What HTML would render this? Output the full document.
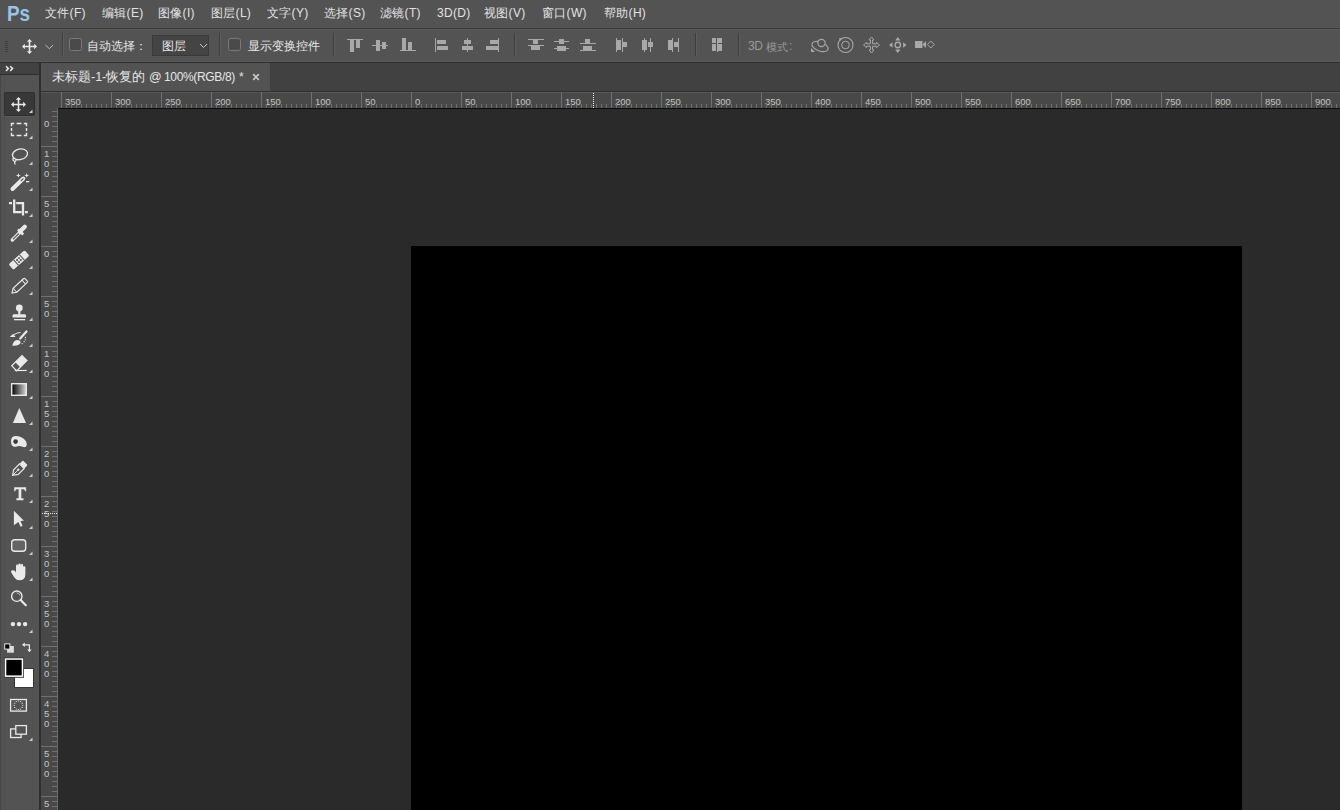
<!DOCTYPE html><html><head><meta charset="utf-8"><style>
*{margin:0;padding:0;box-sizing:border-box}
html,body{width:1340px;height:810px;overflow:hidden;background:#2a2a2a;font-family:"Liberation Sans",sans-serif;font-size:12px;color:#e6e6e6}
.a{position:absolute}
.menu{top:5px;line-height:16px;letter-spacing:0.3px;font-size:12px;color:#e2e2e2;white-space:nowrap}
.ot{line-height:16px;font-size:12px;color:#e6e6e6;white-space:nowrap}
svg{position:absolute;overflow:visible}
</style></head><body>
<div class="a" style="left:0px;top:0px;width:1340px;height:28px;background:#535353;"></div>
<div class="a" style="left:0px;top:28px;width:1340px;height:1px;background:#383838;"></div>
<div class="a" style="left:0px;top:29px;width:1340px;height:33px;background:#535353;"></div>
<div class="a" style="left:0px;top:29px;width:1340px;height:1px;background:#5a5a5a;"></div>
<div class="a" style="left:0px;top:61px;width:1340px;height:1px;background:#5a5a5a;"></div>
<div class="a" style="left:0px;top:62px;width:1340px;height:1px;background:#2e2e2e;"></div>
<div class="a" style="left:41px;top:63px;width:1299px;height:28px;background:#414141;"></div>
<div class="a" style="left:41px;top:63px;width:229px;height:28px;background:#535353;"></div>
<div class="a" style="left:41px;top:91px;width:1299px;height:1px;background:#303030;"></div>
<div class="a" style="left:0px;top:63px;width:39px;height:11px;background:#424242;"></div>
<div class="a" style="left:0px;top:74px;width:39px;height:1px;background:#2e2e2e;"></div>
<div class="a" style="left:0px;top:75px;width:39px;height:735px;background:#535353;"></div>
<div class="a" style="left:0px;top:75px;width:1px;height:735px;background:#454545;"></div>
<div class="a" style="left:4px;top:75px;width:1px;height:735px;background:#4d4d4d;"></div>
<div class="a" style="left:39px;top:63px;width:2px;height:747px;background:#2f2f2f;"></div>
<div class="a" style="left:41px;top:92px;width:1299px;height:16px;background:#484848;"></div>
<div class="a" style="left:41px;top:92px;width:16px;height:718px;background:#484848;"></div>
<div class="a" style="left:41px;top:92px;width:1299px;height:1px;background:#585858;"></div>
<div class="a" style="left:58px;top:108px;width:1282px;height:1px;background:#0c0c0c;"></div>
<div class="a" style="left:57px;top:108px;width:1px;height:702px;background:#6a6a6a;"></div>
<div class="a" style="left:411px;top:246px;width:831px;height:564px;background:#000000;"></div>
<svg class="a" style="left:0;top:0" width="1340" height="810"><rect x="61" y="92" width="1" height="16" fill="#707070"/><text x="65" y="105" font-size="9.5" fill="#c4c4c4" font-family="Liberation Sans">350</text><rect x="66" y="104" width="1" height="4" fill="#707070"/><rect x="71" y="104" width="1" height="4" fill="#707070"/><rect x="76" y="104" width="1" height="4" fill="#707070"/><rect x="81" y="104" width="1" height="4" fill="#707070"/><rect x="86" y="104" width="1" height="4" fill="#707070"/><rect x="91" y="104" width="1" height="4" fill="#707070"/><rect x="96" y="104" width="1" height="4" fill="#707070"/><rect x="101" y="104" width="1" height="4" fill="#707070"/><rect x="106" y="104" width="1" height="4" fill="#707070"/><rect x="111" y="92" width="1" height="16" fill="#707070"/><text x="115" y="105" font-size="9.5" fill="#c4c4c4" font-family="Liberation Sans">300</text><rect x="116" y="104" width="1" height="4" fill="#707070"/><rect x="121" y="104" width="1" height="4" fill="#707070"/><rect x="126" y="104" width="1" height="4" fill="#707070"/><rect x="131" y="104" width="1" height="4" fill="#707070"/><rect x="136" y="104" width="1" height="4" fill="#707070"/><rect x="141" y="104" width="1" height="4" fill="#707070"/><rect x="146" y="104" width="1" height="4" fill="#707070"/><rect x="151" y="104" width="1" height="4" fill="#707070"/><rect x="156" y="104" width="1" height="4" fill="#707070"/><rect x="161" y="92" width="1" height="16" fill="#707070"/><text x="165" y="105" font-size="9.5" fill="#c4c4c4" font-family="Liberation Sans">250</text><rect x="166" y="104" width="1" height="4" fill="#707070"/><rect x="171" y="104" width="1" height="4" fill="#707070"/><rect x="176" y="104" width="1" height="4" fill="#707070"/><rect x="181" y="104" width="1" height="4" fill="#707070"/><rect x="186" y="104" width="1" height="4" fill="#707070"/><rect x="191" y="104" width="1" height="4" fill="#707070"/><rect x="196" y="104" width="1" height="4" fill="#707070"/><rect x="201" y="104" width="1" height="4" fill="#707070"/><rect x="206" y="104" width="1" height="4" fill="#707070"/><rect x="211" y="92" width="1" height="16" fill="#707070"/><text x="215" y="105" font-size="9.5" fill="#c4c4c4" font-family="Liberation Sans">200</text><rect x="216" y="104" width="1" height="4" fill="#707070"/><rect x="221" y="104" width="1" height="4" fill="#707070"/><rect x="226" y="104" width="1" height="4" fill="#707070"/><rect x="231" y="104" width="1" height="4" fill="#707070"/><rect x="236" y="104" width="1" height="4" fill="#707070"/><rect x="241" y="104" width="1" height="4" fill="#707070"/><rect x="246" y="104" width="1" height="4" fill="#707070"/><rect x="251" y="104" width="1" height="4" fill="#707070"/><rect x="256" y="104" width="1" height="4" fill="#707070"/><rect x="261" y="92" width="1" height="16" fill="#707070"/><text x="265" y="105" font-size="9.5" fill="#c4c4c4" font-family="Liberation Sans">150</text><rect x="266" y="104" width="1" height="4" fill="#707070"/><rect x="271" y="104" width="1" height="4" fill="#707070"/><rect x="276" y="104" width="1" height="4" fill="#707070"/><rect x="281" y="104" width="1" height="4" fill="#707070"/><rect x="286" y="104" width="1" height="4" fill="#707070"/><rect x="291" y="104" width="1" height="4" fill="#707070"/><rect x="296" y="104" width="1" height="4" fill="#707070"/><rect x="301" y="104" width="1" height="4" fill="#707070"/><rect x="306" y="104" width="1" height="4" fill="#707070"/><rect x="311" y="92" width="1" height="16" fill="#707070"/><text x="315" y="105" font-size="9.5" fill="#c4c4c4" font-family="Liberation Sans">100</text><rect x="316" y="104" width="1" height="4" fill="#707070"/><rect x="321" y="104" width="1" height="4" fill="#707070"/><rect x="326" y="104" width="1" height="4" fill="#707070"/><rect x="331" y="104" width="1" height="4" fill="#707070"/><rect x="336" y="104" width="1" height="4" fill="#707070"/><rect x="341" y="104" width="1" height="4" fill="#707070"/><rect x="346" y="104" width="1" height="4" fill="#707070"/><rect x="351" y="104" width="1" height="4" fill="#707070"/><rect x="356" y="104" width="1" height="4" fill="#707070"/><rect x="361" y="92" width="1" height="16" fill="#707070"/><text x="365" y="105" font-size="9.5" fill="#c4c4c4" font-family="Liberation Sans">50</text><rect x="366" y="104" width="1" height="4" fill="#707070"/><rect x="371" y="104" width="1" height="4" fill="#707070"/><rect x="376" y="104" width="1" height="4" fill="#707070"/><rect x="381" y="104" width="1" height="4" fill="#707070"/><rect x="386" y="104" width="1" height="4" fill="#707070"/><rect x="391" y="104" width="1" height="4" fill="#707070"/><rect x="396" y="104" width="1" height="4" fill="#707070"/><rect x="401" y="104" width="1" height="4" fill="#707070"/><rect x="406" y="104" width="1" height="4" fill="#707070"/><rect x="411" y="92" width="1" height="16" fill="#707070"/><text x="415" y="105" font-size="9.5" fill="#c4c4c4" font-family="Liberation Sans">0</text><rect x="416" y="104" width="1" height="4" fill="#707070"/><rect x="421" y="104" width="1" height="4" fill="#707070"/><rect x="426" y="104" width="1" height="4" fill="#707070"/><rect x="431" y="104" width="1" height="4" fill="#707070"/><rect x="436" y="104" width="1" height="4" fill="#707070"/><rect x="441" y="104" width="1" height="4" fill="#707070"/><rect x="446" y="104" width="1" height="4" fill="#707070"/><rect x="451" y="104" width="1" height="4" fill="#707070"/><rect x="456" y="104" width="1" height="4" fill="#707070"/><rect x="461" y="92" width="1" height="16" fill="#707070"/><text x="465" y="105" font-size="9.5" fill="#c4c4c4" font-family="Liberation Sans">50</text><rect x="466" y="104" width="1" height="4" fill="#707070"/><rect x="471" y="104" width="1" height="4" fill="#707070"/><rect x="476" y="104" width="1" height="4" fill="#707070"/><rect x="481" y="104" width="1" height="4" fill="#707070"/><rect x="486" y="104" width="1" height="4" fill="#707070"/><rect x="491" y="104" width="1" height="4" fill="#707070"/><rect x="496" y="104" width="1" height="4" fill="#707070"/><rect x="501" y="104" width="1" height="4" fill="#707070"/><rect x="506" y="104" width="1" height="4" fill="#707070"/><rect x="511" y="92" width="1" height="16" fill="#707070"/><text x="515" y="105" font-size="9.5" fill="#c4c4c4" font-family="Liberation Sans">100</text><rect x="516" y="104" width="1" height="4" fill="#707070"/><rect x="521" y="104" width="1" height="4" fill="#707070"/><rect x="526" y="104" width="1" height="4" fill="#707070"/><rect x="531" y="104" width="1" height="4" fill="#707070"/><rect x="536" y="104" width="1" height="4" fill="#707070"/><rect x="541" y="104" width="1" height="4" fill="#707070"/><rect x="546" y="104" width="1" height="4" fill="#707070"/><rect x="551" y="104" width="1" height="4" fill="#707070"/><rect x="556" y="104" width="1" height="4" fill="#707070"/><rect x="561" y="92" width="1" height="16" fill="#707070"/><text x="565" y="105" font-size="9.5" fill="#c4c4c4" font-family="Liberation Sans">150</text><rect x="566" y="104" width="1" height="4" fill="#707070"/><rect x="571" y="104" width="1" height="4" fill="#707070"/><rect x="576" y="104" width="1" height="4" fill="#707070"/><rect x="581" y="104" width="1" height="4" fill="#707070"/><rect x="586" y="104" width="1" height="4" fill="#707070"/><rect x="591" y="104" width="1" height="4" fill="#707070"/><rect x="596" y="104" width="1" height="4" fill="#707070"/><rect x="601" y="104" width="1" height="4" fill="#707070"/><rect x="606" y="104" width="1" height="4" fill="#707070"/><rect x="611" y="92" width="1" height="16" fill="#707070"/><text x="615" y="105" font-size="9.5" fill="#c4c4c4" font-family="Liberation Sans">200</text><rect x="616" y="104" width="1" height="4" fill="#707070"/><rect x="621" y="104" width="1" height="4" fill="#707070"/><rect x="626" y="104" width="1" height="4" fill="#707070"/><rect x="631" y="104" width="1" height="4" fill="#707070"/><rect x="636" y="104" width="1" height="4" fill="#707070"/><rect x="641" y="104" width="1" height="4" fill="#707070"/><rect x="646" y="104" width="1" height="4" fill="#707070"/><rect x="651" y="104" width="1" height="4" fill="#707070"/><rect x="656" y="104" width="1" height="4" fill="#707070"/><rect x="661" y="92" width="1" height="16" fill="#707070"/><text x="665" y="105" font-size="9.5" fill="#c4c4c4" font-family="Liberation Sans">250</text><rect x="666" y="104" width="1" height="4" fill="#707070"/><rect x="671" y="104" width="1" height="4" fill="#707070"/><rect x="676" y="104" width="1" height="4" fill="#707070"/><rect x="681" y="104" width="1" height="4" fill="#707070"/><rect x="686" y="104" width="1" height="4" fill="#707070"/><rect x="691" y="104" width="1" height="4" fill="#707070"/><rect x="696" y="104" width="1" height="4" fill="#707070"/><rect x="701" y="104" width="1" height="4" fill="#707070"/><rect x="706" y="104" width="1" height="4" fill="#707070"/><rect x="711" y="92" width="1" height="16" fill="#707070"/><text x="715" y="105" font-size="9.5" fill="#c4c4c4" font-family="Liberation Sans">300</text><rect x="716" y="104" width="1" height="4" fill="#707070"/><rect x="721" y="104" width="1" height="4" fill="#707070"/><rect x="726" y="104" width="1" height="4" fill="#707070"/><rect x="731" y="104" width="1" height="4" fill="#707070"/><rect x="736" y="104" width="1" height="4" fill="#707070"/><rect x="741" y="104" width="1" height="4" fill="#707070"/><rect x="746" y="104" width="1" height="4" fill="#707070"/><rect x="751" y="104" width="1" height="4" fill="#707070"/><rect x="756" y="104" width="1" height="4" fill="#707070"/><rect x="761" y="92" width="1" height="16" fill="#707070"/><text x="765" y="105" font-size="9.5" fill="#c4c4c4" font-family="Liberation Sans">350</text><rect x="766" y="104" width="1" height="4" fill="#707070"/><rect x="771" y="104" width="1" height="4" fill="#707070"/><rect x="776" y="104" width="1" height="4" fill="#707070"/><rect x="781" y="104" width="1" height="4" fill="#707070"/><rect x="786" y="104" width="1" height="4" fill="#707070"/><rect x="791" y="104" width="1" height="4" fill="#707070"/><rect x="796" y="104" width="1" height="4" fill="#707070"/><rect x="801" y="104" width="1" height="4" fill="#707070"/><rect x="806" y="104" width="1" height="4" fill="#707070"/><rect x="811" y="92" width="1" height="16" fill="#707070"/><text x="815" y="105" font-size="9.5" fill="#c4c4c4" font-family="Liberation Sans">400</text><rect x="816" y="104" width="1" height="4" fill="#707070"/><rect x="821" y="104" width="1" height="4" fill="#707070"/><rect x="826" y="104" width="1" height="4" fill="#707070"/><rect x="831" y="104" width="1" height="4" fill="#707070"/><rect x="836" y="104" width="1" height="4" fill="#707070"/><rect x="841" y="104" width="1" height="4" fill="#707070"/><rect x="846" y="104" width="1" height="4" fill="#707070"/><rect x="851" y="104" width="1" height="4" fill="#707070"/><rect x="856" y="104" width="1" height="4" fill="#707070"/><rect x="861" y="92" width="1" height="16" fill="#707070"/><text x="865" y="105" font-size="9.5" fill="#c4c4c4" font-family="Liberation Sans">450</text><rect x="866" y="104" width="1" height="4" fill="#707070"/><rect x="871" y="104" width="1" height="4" fill="#707070"/><rect x="876" y="104" width="1" height="4" fill="#707070"/><rect x="881" y="104" width="1" height="4" fill="#707070"/><rect x="886" y="104" width="1" height="4" fill="#707070"/><rect x="891" y="104" width="1" height="4" fill="#707070"/><rect x="896" y="104" width="1" height="4" fill="#707070"/><rect x="901" y="104" width="1" height="4" fill="#707070"/><rect x="906" y="104" width="1" height="4" fill="#707070"/><rect x="911" y="92" width="1" height="16" fill="#707070"/><text x="915" y="105" font-size="9.5" fill="#c4c4c4" font-family="Liberation Sans">500</text><rect x="916" y="104" width="1" height="4" fill="#707070"/><rect x="921" y="104" width="1" height="4" fill="#707070"/><rect x="926" y="104" width="1" height="4" fill="#707070"/><rect x="931" y="104" width="1" height="4" fill="#707070"/><rect x="936" y="104" width="1" height="4" fill="#707070"/><rect x="941" y="104" width="1" height="4" fill="#707070"/><rect x="946" y="104" width="1" height="4" fill="#707070"/><rect x="951" y="104" width="1" height="4" fill="#707070"/><rect x="956" y="104" width="1" height="4" fill="#707070"/><rect x="961" y="92" width="1" height="16" fill="#707070"/><text x="965" y="105" font-size="9.5" fill="#c4c4c4" font-family="Liberation Sans">550</text><rect x="966" y="104" width="1" height="4" fill="#707070"/><rect x="971" y="104" width="1" height="4" fill="#707070"/><rect x="976" y="104" width="1" height="4" fill="#707070"/><rect x="981" y="104" width="1" height="4" fill="#707070"/><rect x="986" y="104" width="1" height="4" fill="#707070"/><rect x="991" y="104" width="1" height="4" fill="#707070"/><rect x="996" y="104" width="1" height="4" fill="#707070"/><rect x="1001" y="104" width="1" height="4" fill="#707070"/><rect x="1006" y="104" width="1" height="4" fill="#707070"/><rect x="1011" y="92" width="1" height="16" fill="#707070"/><text x="1015" y="105" font-size="9.5" fill="#c4c4c4" font-family="Liberation Sans">600</text><rect x="1016" y="104" width="1" height="4" fill="#707070"/><rect x="1021" y="104" width="1" height="4" fill="#707070"/><rect x="1026" y="104" width="1" height="4" fill="#707070"/><rect x="1031" y="104" width="1" height="4" fill="#707070"/><rect x="1036" y="104" width="1" height="4" fill="#707070"/><rect x="1041" y="104" width="1" height="4" fill="#707070"/><rect x="1046" y="104" width="1" height="4" fill="#707070"/><rect x="1051" y="104" width="1" height="4" fill="#707070"/><rect x="1056" y="104" width="1" height="4" fill="#707070"/><rect x="1061" y="92" width="1" height="16" fill="#707070"/><text x="1065" y="105" font-size="9.5" fill="#c4c4c4" font-family="Liberation Sans">650</text><rect x="1066" y="104" width="1" height="4" fill="#707070"/><rect x="1071" y="104" width="1" height="4" fill="#707070"/><rect x="1076" y="104" width="1" height="4" fill="#707070"/><rect x="1081" y="104" width="1" height="4" fill="#707070"/><rect x="1086" y="104" width="1" height="4" fill="#707070"/><rect x="1091" y="104" width="1" height="4" fill="#707070"/><rect x="1096" y="104" width="1" height="4" fill="#707070"/><rect x="1101" y="104" width="1" height="4" fill="#707070"/><rect x="1106" y="104" width="1" height="4" fill="#707070"/><rect x="1111" y="92" width="1" height="16" fill="#707070"/><text x="1115" y="105" font-size="9.5" fill="#c4c4c4" font-family="Liberation Sans">700</text><rect x="1116" y="104" width="1" height="4" fill="#707070"/><rect x="1121" y="104" width="1" height="4" fill="#707070"/><rect x="1126" y="104" width="1" height="4" fill="#707070"/><rect x="1131" y="104" width="1" height="4" fill="#707070"/><rect x="1136" y="104" width="1" height="4" fill="#707070"/><rect x="1141" y="104" width="1" height="4" fill="#707070"/><rect x="1146" y="104" width="1" height="4" fill="#707070"/><rect x="1151" y="104" width="1" height="4" fill="#707070"/><rect x="1156" y="104" width="1" height="4" fill="#707070"/><rect x="1161" y="92" width="1" height="16" fill="#707070"/><text x="1165" y="105" font-size="9.5" fill="#c4c4c4" font-family="Liberation Sans">750</text><rect x="1166" y="104" width="1" height="4" fill="#707070"/><rect x="1171" y="104" width="1" height="4" fill="#707070"/><rect x="1176" y="104" width="1" height="4" fill="#707070"/><rect x="1181" y="104" width="1" height="4" fill="#707070"/><rect x="1186" y="104" width="1" height="4" fill="#707070"/><rect x="1191" y="104" width="1" height="4" fill="#707070"/><rect x="1196" y="104" width="1" height="4" fill="#707070"/><rect x="1201" y="104" width="1" height="4" fill="#707070"/><rect x="1206" y="104" width="1" height="4" fill="#707070"/><rect x="1211" y="92" width="1" height="16" fill="#707070"/><text x="1215" y="105" font-size="9.5" fill="#c4c4c4" font-family="Liberation Sans">800</text><rect x="1216" y="104" width="1" height="4" fill="#707070"/><rect x="1221" y="104" width="1" height="4" fill="#707070"/><rect x="1226" y="104" width="1" height="4" fill="#707070"/><rect x="1231" y="104" width="1" height="4" fill="#707070"/><rect x="1236" y="104" width="1" height="4" fill="#707070"/><rect x="1241" y="104" width="1" height="4" fill="#707070"/><rect x="1246" y="104" width="1" height="4" fill="#707070"/><rect x="1251" y="104" width="1" height="4" fill="#707070"/><rect x="1256" y="104" width="1" height="4" fill="#707070"/><rect x="1261" y="92" width="1" height="16" fill="#707070"/><text x="1265" y="105" font-size="9.5" fill="#c4c4c4" font-family="Liberation Sans">850</text><rect x="1266" y="104" width="1" height="4" fill="#707070"/><rect x="1271" y="104" width="1" height="4" fill="#707070"/><rect x="1276" y="104" width="1" height="4" fill="#707070"/><rect x="1281" y="104" width="1" height="4" fill="#707070"/><rect x="1286" y="104" width="1" height="4" fill="#707070"/><rect x="1291" y="104" width="1" height="4" fill="#707070"/><rect x="1296" y="104" width="1" height="4" fill="#707070"/><rect x="1301" y="104" width="1" height="4" fill="#707070"/><rect x="1306" y="104" width="1" height="4" fill="#707070"/><rect x="1311" y="92" width="1" height="16" fill="#707070"/><text x="1315" y="105" font-size="9.5" fill="#c4c4c4" font-family="Liberation Sans">900</text><rect x="1316" y="104" width="1" height="4" fill="#707070"/><rect x="1321" y="104" width="1" height="4" fill="#707070"/><rect x="1326" y="104" width="1" height="4" fill="#707070"/><rect x="1331" y="104" width="1" height="4" fill="#707070"/><rect x="1336" y="104" width="1" height="4" fill="#707070"/><rect x="52" y="111" width="5" height="1" fill="#707070"/><rect x="52" y="116" width="5" height="1" fill="#707070"/><rect x="52" y="121" width="5" height="1" fill="#707070"/><rect x="52" y="126" width="5" height="1" fill="#707070"/><rect x="52" y="131" width="5" height="1" fill="#707070"/><rect x="52" y="136" width="5" height="1" fill="#707070"/><rect x="52" y="141" width="5" height="1" fill="#707070"/><rect x="41" y="146" width="16" height="1" fill="#707070"/><text x="44" y="156.8" font-size="9.5" fill="#c4c4c4" font-family="Liberation Sans">1</text><text x="44" y="166.8" font-size="9.5" fill="#c4c4c4" font-family="Liberation Sans">0</text><text x="44" y="176.8" font-size="9.5" fill="#c4c4c4" font-family="Liberation Sans">0</text><rect x="52" y="151" width="5" height="1" fill="#707070"/><rect x="52" y="156" width="5" height="1" fill="#707070"/><rect x="52" y="161" width="5" height="1" fill="#707070"/><rect x="52" y="166" width="5" height="1" fill="#707070"/><rect x="52" y="171" width="5" height="1" fill="#707070"/><rect x="52" y="176" width="5" height="1" fill="#707070"/><rect x="52" y="181" width="5" height="1" fill="#707070"/><rect x="52" y="186" width="5" height="1" fill="#707070"/><rect x="52" y="191" width="5" height="1" fill="#707070"/><rect x="41" y="196" width="16" height="1" fill="#707070"/><text x="44" y="206.8" font-size="9.5" fill="#c4c4c4" font-family="Liberation Sans">5</text><text x="44" y="216.8" font-size="9.5" fill="#c4c4c4" font-family="Liberation Sans">0</text><rect x="52" y="201" width="5" height="1" fill="#707070"/><rect x="52" y="206" width="5" height="1" fill="#707070"/><rect x="52" y="211" width="5" height="1" fill="#707070"/><rect x="52" y="216" width="5" height="1" fill="#707070"/><rect x="52" y="221" width="5" height="1" fill="#707070"/><rect x="52" y="226" width="5" height="1" fill="#707070"/><rect x="52" y="231" width="5" height="1" fill="#707070"/><rect x="52" y="236" width="5" height="1" fill="#707070"/><rect x="52" y="241" width="5" height="1" fill="#707070"/><rect x="41" y="246" width="16" height="1" fill="#707070"/><text x="44" y="256.8" font-size="9.5" fill="#c4c4c4" font-family="Liberation Sans">0</text><rect x="52" y="251" width="5" height="1" fill="#707070"/><rect x="52" y="256" width="5" height="1" fill="#707070"/><rect x="52" y="261" width="5" height="1" fill="#707070"/><rect x="52" y="266" width="5" height="1" fill="#707070"/><rect x="52" y="271" width="5" height="1" fill="#707070"/><rect x="52" y="276" width="5" height="1" fill="#707070"/><rect x="52" y="281" width="5" height="1" fill="#707070"/><rect x="52" y="286" width="5" height="1" fill="#707070"/><rect x="52" y="291" width="5" height="1" fill="#707070"/><rect x="41" y="296" width="16" height="1" fill="#707070"/><text x="44" y="306.8" font-size="9.5" fill="#c4c4c4" font-family="Liberation Sans">5</text><text x="44" y="316.8" font-size="9.5" fill="#c4c4c4" font-family="Liberation Sans">0</text><rect x="52" y="301" width="5" height="1" fill="#707070"/><rect x="52" y="306" width="5" height="1" fill="#707070"/><rect x="52" y="311" width="5" height="1" fill="#707070"/><rect x="52" y="316" width="5" height="1" fill="#707070"/><rect x="52" y="321" width="5" height="1" fill="#707070"/><rect x="52" y="326" width="5" height="1" fill="#707070"/><rect x="52" y="331" width="5" height="1" fill="#707070"/><rect x="52" y="336" width="5" height="1" fill="#707070"/><rect x="52" y="341" width="5" height="1" fill="#707070"/><rect x="41" y="346" width="16" height="1" fill="#707070"/><text x="44" y="356.8" font-size="9.5" fill="#c4c4c4" font-family="Liberation Sans">1</text><text x="44" y="366.8" font-size="9.5" fill="#c4c4c4" font-family="Liberation Sans">0</text><text x="44" y="376.8" font-size="9.5" fill="#c4c4c4" font-family="Liberation Sans">0</text><rect x="52" y="351" width="5" height="1" fill="#707070"/><rect x="52" y="356" width="5" height="1" fill="#707070"/><rect x="52" y="361" width="5" height="1" fill="#707070"/><rect x="52" y="366" width="5" height="1" fill="#707070"/><rect x="52" y="371" width="5" height="1" fill="#707070"/><rect x="52" y="376" width="5" height="1" fill="#707070"/><rect x="52" y="381" width="5" height="1" fill="#707070"/><rect x="52" y="386" width="5" height="1" fill="#707070"/><rect x="52" y="391" width="5" height="1" fill="#707070"/><rect x="41" y="396" width="16" height="1" fill="#707070"/><text x="44" y="406.8" font-size="9.5" fill="#c4c4c4" font-family="Liberation Sans">1</text><text x="44" y="416.8" font-size="9.5" fill="#c4c4c4" font-family="Liberation Sans">5</text><text x="44" y="426.8" font-size="9.5" fill="#c4c4c4" font-family="Liberation Sans">0</text><rect x="52" y="401" width="5" height="1" fill="#707070"/><rect x="52" y="406" width="5" height="1" fill="#707070"/><rect x="52" y="411" width="5" height="1" fill="#707070"/><rect x="52" y="416" width="5" height="1" fill="#707070"/><rect x="52" y="421" width="5" height="1" fill="#707070"/><rect x="52" y="426" width="5" height="1" fill="#707070"/><rect x="52" y="431" width="5" height="1" fill="#707070"/><rect x="52" y="436" width="5" height="1" fill="#707070"/><rect x="52" y="441" width="5" height="1" fill="#707070"/><rect x="41" y="446" width="16" height="1" fill="#707070"/><text x="44" y="456.8" font-size="9.5" fill="#c4c4c4" font-family="Liberation Sans">2</text><text x="44" y="466.8" font-size="9.5" fill="#c4c4c4" font-family="Liberation Sans">0</text><text x="44" y="476.8" font-size="9.5" fill="#c4c4c4" font-family="Liberation Sans">0</text><rect x="52" y="451" width="5" height="1" fill="#707070"/><rect x="52" y="456" width="5" height="1" fill="#707070"/><rect x="52" y="461" width="5" height="1" fill="#707070"/><rect x="52" y="466" width="5" height="1" fill="#707070"/><rect x="52" y="471" width="5" height="1" fill="#707070"/><rect x="52" y="476" width="5" height="1" fill="#707070"/><rect x="52" y="481" width="5" height="1" fill="#707070"/><rect x="52" y="486" width="5" height="1" fill="#707070"/><rect x="52" y="491" width="5" height="1" fill="#707070"/><rect x="41" y="496" width="16" height="1" fill="#707070"/><text x="44" y="506.8" font-size="9.5" fill="#c4c4c4" font-family="Liberation Sans">2</text><text x="44" y="516.8" font-size="9.5" fill="#c4c4c4" font-family="Liberation Sans">5</text><text x="44" y="526.8" font-size="9.5" fill="#c4c4c4" font-family="Liberation Sans">0</text><rect x="52" y="501" width="5" height="1" fill="#707070"/><rect x="52" y="506" width="5" height="1" fill="#707070"/><rect x="52" y="511" width="5" height="1" fill="#707070"/><rect x="52" y="516" width="5" height="1" fill="#707070"/><rect x="52" y="521" width="5" height="1" fill="#707070"/><rect x="52" y="526" width="5" height="1" fill="#707070"/><rect x="52" y="531" width="5" height="1" fill="#707070"/><rect x="52" y="536" width="5" height="1" fill="#707070"/><rect x="52" y="541" width="5" height="1" fill="#707070"/><rect x="41" y="546" width="16" height="1" fill="#707070"/><text x="44" y="556.8" font-size="9.5" fill="#c4c4c4" font-family="Liberation Sans">3</text><text x="44" y="566.8" font-size="9.5" fill="#c4c4c4" font-family="Liberation Sans">0</text><text x="44" y="576.8" font-size="9.5" fill="#c4c4c4" font-family="Liberation Sans">0</text><rect x="52" y="551" width="5" height="1" fill="#707070"/><rect x="52" y="556" width="5" height="1" fill="#707070"/><rect x="52" y="561" width="5" height="1" fill="#707070"/><rect x="52" y="566" width="5" height="1" fill="#707070"/><rect x="52" y="571" width="5" height="1" fill="#707070"/><rect x="52" y="576" width="5" height="1" fill="#707070"/><rect x="52" y="581" width="5" height="1" fill="#707070"/><rect x="52" y="586" width="5" height="1" fill="#707070"/><rect x="52" y="591" width="5" height="1" fill="#707070"/><rect x="41" y="596" width="16" height="1" fill="#707070"/><text x="44" y="606.8" font-size="9.5" fill="#c4c4c4" font-family="Liberation Sans">3</text><text x="44" y="616.8" font-size="9.5" fill="#c4c4c4" font-family="Liberation Sans">5</text><text x="44" y="626.8" font-size="9.5" fill="#c4c4c4" font-family="Liberation Sans">0</text><rect x="52" y="601" width="5" height="1" fill="#707070"/><rect x="52" y="606" width="5" height="1" fill="#707070"/><rect x="52" y="611" width="5" height="1" fill="#707070"/><rect x="52" y="616" width="5" height="1" fill="#707070"/><rect x="52" y="621" width="5" height="1" fill="#707070"/><rect x="52" y="626" width="5" height="1" fill="#707070"/><rect x="52" y="631" width="5" height="1" fill="#707070"/><rect x="52" y="636" width="5" height="1" fill="#707070"/><rect x="52" y="641" width="5" height="1" fill="#707070"/><rect x="41" y="646" width="16" height="1" fill="#707070"/><text x="44" y="656.8" font-size="9.5" fill="#c4c4c4" font-family="Liberation Sans">4</text><text x="44" y="666.8" font-size="9.5" fill="#c4c4c4" font-family="Liberation Sans">0</text><text x="44" y="676.8" font-size="9.5" fill="#c4c4c4" font-family="Liberation Sans">0</text><rect x="52" y="651" width="5" height="1" fill="#707070"/><rect x="52" y="656" width="5" height="1" fill="#707070"/><rect x="52" y="661" width="5" height="1" fill="#707070"/><rect x="52" y="666" width="5" height="1" fill="#707070"/><rect x="52" y="671" width="5" height="1" fill="#707070"/><rect x="52" y="676" width="5" height="1" fill="#707070"/><rect x="52" y="681" width="5" height="1" fill="#707070"/><rect x="52" y="686" width="5" height="1" fill="#707070"/><rect x="52" y="691" width="5" height="1" fill="#707070"/><rect x="41" y="696" width="16" height="1" fill="#707070"/><text x="44" y="706.8" font-size="9.5" fill="#c4c4c4" font-family="Liberation Sans">4</text><text x="44" y="716.8" font-size="9.5" fill="#c4c4c4" font-family="Liberation Sans">5</text><text x="44" y="726.8" font-size="9.5" fill="#c4c4c4" font-family="Liberation Sans">0</text><rect x="52" y="701" width="5" height="1" fill="#707070"/><rect x="52" y="706" width="5" height="1" fill="#707070"/><rect x="52" y="711" width="5" height="1" fill="#707070"/><rect x="52" y="716" width="5" height="1" fill="#707070"/><rect x="52" y="721" width="5" height="1" fill="#707070"/><rect x="52" y="726" width="5" height="1" fill="#707070"/><rect x="52" y="731" width="5" height="1" fill="#707070"/><rect x="52" y="736" width="5" height="1" fill="#707070"/><rect x="52" y="741" width="5" height="1" fill="#707070"/><rect x="41" y="746" width="16" height="1" fill="#707070"/><text x="44" y="756.8" font-size="9.5" fill="#c4c4c4" font-family="Liberation Sans">5</text><text x="44" y="766.8" font-size="9.5" fill="#c4c4c4" font-family="Liberation Sans">0</text><text x="44" y="776.8" font-size="9.5" fill="#c4c4c4" font-family="Liberation Sans">0</text><rect x="52" y="751" width="5" height="1" fill="#707070"/><rect x="52" y="756" width="5" height="1" fill="#707070"/><rect x="52" y="761" width="5" height="1" fill="#707070"/><rect x="52" y="766" width="5" height="1" fill="#707070"/><rect x="52" y="771" width="5" height="1" fill="#707070"/><rect x="52" y="776" width="5" height="1" fill="#707070"/><rect x="52" y="781" width="5" height="1" fill="#707070"/><rect x="52" y="786" width="5" height="1" fill="#707070"/><rect x="52" y="791" width="5" height="1" fill="#707070"/><rect x="41" y="796" width="16" height="1" fill="#707070"/><text x="44" y="806.8" font-size="9.5" fill="#c4c4c4" font-family="Liberation Sans">5</text><text x="44" y="816.8" font-size="9.5" fill="#c4c4c4" font-family="Liberation Sans">5</text><text x="44" y="826.8" font-size="9.5" fill="#c4c4c4" font-family="Liberation Sans">0</text><rect x="52" y="801" width="5" height="1" fill="#707070"/><rect x="52" y="806" width="5" height="1" fill="#707070"/><text x="44" y="126.8" font-size="9.5" fill="#c4c4c4" font-family="Liberation Sans">0</text><rect x="593" y="93" width="1" height="1" fill="#f0f0f0"/><rect x="593" y="95" width="1" height="1" fill="#f0f0f0"/><rect x="593" y="97" width="1" height="1" fill="#f0f0f0"/><rect x="593" y="99" width="1" height="1" fill="#f0f0f0"/><rect x="593" y="101" width="1" height="1" fill="#f0f0f0"/><rect x="593" y="103" width="1" height="1" fill="#f0f0f0"/><rect x="593" y="105" width="1" height="1" fill="#f0f0f0"/><rect x="593" y="107" width="1" height="1" fill="#f0f0f0"/><rect x="42" y="513" width="1" height="1" fill="#f0f0f0"/><rect x="44" y="513" width="1" height="1" fill="#f0f0f0"/><rect x="46" y="513" width="1" height="1" fill="#f0f0f0"/><rect x="48" y="513" width="1" height="1" fill="#f0f0f0"/><rect x="50" y="513" width="1" height="1" fill="#f0f0f0"/><rect x="52" y="513" width="1" height="1" fill="#f0f0f0"/><rect x="54" y="513" width="1" height="1" fill="#f0f0f0"/><rect x="56" y="513" width="1" height="1" fill="#f0f0f0"/></svg>
<div class="a" style="left:41px;top:93px;width:16px;height:15px;background:#484848;"></div>
<div class="a" style="left:7px;top:1.5px;font-size:22px;line-height:24px;font-weight:bold;color:#98c2e6;transform:scaleX(0.86);transform-origin:0 0;letter-spacing:0px">Ps</div>
<div class="a menu" style="left:45px">文件(F)</div>
<div class="a menu" style="left:102px">编辑(E)</div>
<div class="a menu" style="left:158px">图像(I)</div>
<div class="a menu" style="left:211px">图层(L)</div>
<div class="a menu" style="left:267px">文字(Y)</div>
<div class="a menu" style="left:324px">选择(S)</div>
<div class="a menu" style="left:380px">滤镜(T)</div>
<div class="a menu" style="left:437px">3D(D)</div>
<div class="a menu" style="left:484px">视图(V)</div>
<div class="a menu" style="left:542px">窗口(W)</div>
<div class="a menu" style="left:604px">帮助(H)</div>
<div class="a ot" style="left:87px;top:38px">自动选择：</div>
<div class="a" style="left:152px;top:35px;width:57px;height:21px;background:#444444;border:1px solid #3a3a3a"></div>
<div class="a ot" style="left:162px;top:38px">图层</div>
<div class="a ot" style="left:248px;top:38px">显示变换控件</div>
<div class="a ot" style="left:748px;top:38px;color:#9a9a9a;letter-spacing:-0.3px">3D</div>
<div class="a ot" style="left:766px;top:38.5px;color:#9a9a9a;font-size:11px;letter-spacing:-0.3px">模式</div>
<div class="a ot" style="left:789px;top:38px;color:#9a9a9a">:</div>
<div class="a ot" style="left:52px;top:69px;font-size:12.5px">未标题-1-恢复的</div>
<div class="a ot" style="left:149px;top:69px;font-size:12.5px">@</div>
<div class="a ot" style="left:164px;top:69px;font-size:12px;letter-spacing:-0.35px">100%(RGB/8)</div>
<div class="a ot" style="left:239px;top:69px;font-size:12px">*</div>
<svg class="a" style="left:0;top:0" width="300" height="100"><path d="M253.2 74.2 L258.8 79.8 M258.8 74.2 L253.2 79.8" stroke="#c4c4c4" stroke-width="1.8"/></svg>
<svg class="a" style="left:0;top:0" width="40" height="810"><path d="M6 66.3 L8.4 68.6 L6 70.9 M10.2 66.3 L12.6 68.6 L10.2 70.9" fill="none" stroke="#e9e9e9" stroke-width="1.5"/><rect x="4.5" y="92.5" width="30" height="23" rx="1" fill="#383838" stroke="#2e2e2e"/><rect x="5" y="116" width="29" height="1" fill="#5c5c5c"/><path d="M32.5 109.5 L32.5 113 L29 113 Z" fill="#cfcfcf"/><path d="M32.5 135.5 L32.5 139 L29 139 Z" fill="#cfcfcf"/><path d="M32.5 161.5 L32.5 165 L29 165 Z" fill="#cfcfcf"/><path d="M32.5 187.5 L32.5 191 L29 191 Z" fill="#cfcfcf"/><path d="M32.5 213.5 L32.5 217 L29 217 Z" fill="#cfcfcf"/><path d="M32.5 239.5 L32.5 243 L29 243 Z" fill="#cfcfcf"/><path d="M32.5 265.5 L32.5 269 L29 269 Z" fill="#cfcfcf"/><path d="M32.5 291.5 L32.5 295 L29 295 Z" fill="#cfcfcf"/><path d="M32.5 317.5 L32.5 321 L29 321 Z" fill="#cfcfcf"/><path d="M32.5 343.5 L32.5 347 L29 347 Z" fill="#cfcfcf"/><path d="M32.5 369.5 L32.5 373 L29 373 Z" fill="#cfcfcf"/><path d="M32.5 395.5 L32.5 399 L29 399 Z" fill="#cfcfcf"/><path d="M32.5 421.5 L32.5 425 L29 425 Z" fill="#cfcfcf"/><path d="M32.5 447.5 L32.5 451 L29 451 Z" fill="#cfcfcf"/><path d="M32.5 473.5 L32.5 477 L29 477 Z" fill="#cfcfcf"/><path d="M32.5 499.5 L32.5 503 L29 503 Z" fill="#cfcfcf"/><path d="M32.5 525.5 L32.5 529 L29 529 Z" fill="#cfcfcf"/><path d="M32.5 551.5 L32.5 555 L29 555 Z" fill="#cfcfcf"/><path d="M32.5 577.5 L32.5 581 L29 581 Z" fill="#cfcfcf"/><path d="M32.5 629.5 L32.5 633 L29 633 Z" fill="#cfcfcf"/><path d="M32.5 737.5 L32.5 741 L29 741 Z" fill="#cfcfcf"/><path d="M18.5 97 L21.2 99.8 L19.3 99.8 L19.3 103.7 L23.2 103.7 L23.2 101.8 L26 104.5 L23.2 107.2 L23.2 105.3 L19.3 105.3 L19.3 109.2 L21.2 109.2 L18.5 112 L15.8 109.2 L17.7 109.2 L17.7 105.3 L13.8 105.3 L13.8 107.2 L11 104.5 L13.8 101.8 L13.8 103.7 L17.7 103.7 L17.7 99.8 L15.8 99.8 Z" fill="#e9e9e9"/><path d="M11.5 126.2 V123.5 H14.2 M16.6 123.5 H21.4 M23.8 123.5 H26.5 V126.2 M26.5 128 V131 M26.5 132.8 V135.5 H23.8 M21.4 135.5 H16.6 M14.2 135.5 H11.5 V132.8 M11.5 131 V128" fill="none" stroke="#e9e9e9" stroke-width="1.4"/><ellipse cx="20" cy="154.3" rx="7.6" ry="5.3" transform="rotate(-12 20 154.3)" fill="none" stroke="#e9e9e9" stroke-width="1.3"/><path d="M13.8 157.5 Q12 160 14 161 Q16.5 162 15.8 159.5 M14.5 161 L15 164.5" fill="none" stroke="#e9e9e9" stroke-width="1.3"/><path d="M12.5 189 L23.3 178.5" stroke="#e9e9e9" stroke-width="4" stroke-linecap="round"/><path d="M21.2 180.6 L23 178.8" stroke="#535353" stroke-width="1.2" stroke-linecap="round"/><path d="M18.4 173.3 L19.2 175 L21 175.4 L19.2 175.9 L18.4 177.6 L17.6 175.9 L15.8 175.4 L17.6 175 Z" fill="#e9e9e9"/><path d="M26.7 173.3 L27.5 175 L29.3 175.4 L27.5 175.9 L26.7 177.6 L25.9 175.9 L24.1 175.4 L25.9 175 Z" fill="#e9e9e9"/><rect x="26" y="181" width="3.2" height="1.3" fill="#e9e9e9"/><path d="M9 203.2 H12 M14.2 199.5 V212.2 H21.5 M16.2 203.2 H23 V215.5 M25 212.2 H27.8" fill="none" stroke="#e9e9e9" stroke-width="2.3"/><path d="M12.3 240 L19.5 232.8" stroke="#e9e9e9" stroke-width="3.4" stroke-linecap="round"/><path d="M13 239.3 L18.8 233.5" stroke="#535353" stroke-width="1.1"/><path d="M18 229.3 L23.2 234.5" stroke="#e9e9e9" stroke-width="2.6"/><path d="M20 231.5 L24.8 226.7" stroke="#e9e9e9" stroke-width="4.2" stroke-linecap="round"/><g transform="rotate(-42 19 260)"><rect x="8.3" y="256.3" width="21.4" height="7.4" rx="1.6" fill="#e9e9e9"/><rect x="14.6" y="256.3" width="1" height="7.4" fill="#535353"/><rect x="22.4" y="256.3" width="1" height="7.4" fill="#535353"/></g><circle cx="17.1" cy="260" r="0.95" fill="#3a3a3a"/><circle cx="20.9" cy="260" r="0.95" fill="#3a3a3a"/><circle cx="19" cy="258.1" r="0.95" fill="#3a3a3a"/><circle cx="19" cy="261.9" r="0.95" fill="#3a3a3a"/><g transform="rotate(-43 19 286.5)"><path d="M9.5 286.5 L13.5 283.8 H27.5 Q28.8 283.8 28.8 285.1 V287.9 Q28.8 289.2 27.5 289.2 H13.5 Z" fill="none" stroke="#e9e9e9" stroke-width="1.2"/><path d="M13.5 283.8 V289.2 M25.5 283.8 V289.2" stroke="#e9e9e9" stroke-width="1"/></g><circle cx="19.3" cy="308" r="3.4" fill="#e9e9e9"/><rect x="18.2" y="310.5" width="2.2" height="4" fill="#e9e9e9"/><path d="M12.6 317.6 V315.5 Q12.6 314.3 14 314.3 H24.6 Q26 314.3 26 315.5 V317.6 Z" fill="#e9e9e9"/><rect x="13.9" y="319" width="11.2" height="1.3" fill="#e9e9e9"/><path d="M26.5 331.5 L20.2 338.6" stroke="#e9e9e9" stroke-width="2.2" stroke-linecap="round"/><path d="M12.3 345.8 Q13 341.5 16 340.2 Q18.6 339.4 20.3 341.2 Q21.4 343 19.2 344.6 Q16.5 346 12.3 345.8 Z" fill="#e9e9e9"/><path d="M9.8 337 L13.2 333.8 L15.5 337 Z" fill="#e9e9e9"/><path d="M14 334.6 Q17 332.6 20.5 332.5" fill="none" stroke="#e9e9e9" stroke-width="1"/><circle cx="25.4" cy="337.5" r="0.65" fill="#e9e9e9"/><circle cx="25.3" cy="339.8" r="0.65" fill="#e9e9e9"/><circle cx="24.1" cy="341.7" r="0.65" fill="#e9e9e9"/><circle cx="22.2" cy="343.6" r="0.65" fill="#e9e9e9"/><g transform="rotate(-45 19.5 363)"><rect x="12" y="359.5" width="14.5" height="7" fill="none" stroke="#e9e9e9" stroke-width="1.2"/><rect x="17" y="359.5" width="9.5" height="7" fill="#e9e9e9"/></g><rect x="14.8" y="369.9" width="11.9" height="1.2" fill="#e9e9e9"/><defs><linearGradient id="gr" x1="0" x2="1"><stop offset="0" stop-color="#000"/><stop offset="1" stop-color="#d8d8d8"/></linearGradient></defs><rect x="11.7" y="383.7" width="14.6" height="11.6" fill="url(#gr)" stroke="#e9e9e9" stroke-width="1.4"/><path d="M19.3 408 L26.1 423 L12.9 423 Z" fill="#e9e9e9"/><path d="M11 441 Q11 436 16 436 Q21 436 24.5 439.5 Q27.5 442.5 26.5 446 Q25.5 448 22 446.5 Q19 445.5 16 446.8 Q11 447.5 11 441 Z" fill="#e9e9e9"/><circle cx="15.6" cy="441.6" r="2.3" fill="#3a3a3a"/><g transform="rotate(-45 19.5 468.5)"><path d="M9.8 468.5 L14.5 465.2 H22.8 V471.8 H14.5 Z" fill="none" stroke="#e9e9e9" stroke-width="1.2"/><rect x="22.8" y="465.2" width="4.8" height="6.6" rx="0.8" fill="#e9e9e9"/><path d="M10 468.5 H17.5" stroke="#e9e9e9" stroke-width="0.9"/><circle cx="17.8" cy="468.5" r="1.2" fill="#e9e9e9"/></g><path d="M14.2 487.3 H26.1 V491.3 H25.1 Q24.9 489.3 23.4 489.3 H21.3 V498.3 H23.5 V500.3 H16.4 V498.3 H18.6 V489.3 H16.9 Q15.4 489.3 15.2 491.3 H14.2 Z" fill="#e9e9e9"/><path d="M13.9 510.8 L23.9 520.8 L20.4 520.9 L22.6 525.8 L20.6 526.8 L18.4 521.9 L13.9 525.3 Z" fill="#e9e9e9"/><rect x="11.7" y="539.7" width="14" height="11.6" rx="3" fill="#646464" stroke="#e9e9e9" stroke-width="1.4"/><path d="M14.5 570.5 L16 572.5 V566 Q16 564.6 17.2 564.6 Q18.3 564.6 18.3 566 V570 V564.8 Q18.3 563.5 19.6 563.5 Q20.8 563.5 20.8 564.8 V570 V565.4 Q20.8 564.1 22 564.1 Q23.2 564.1 23.2 565.4 V571 V567.3 Q23.2 566.2 24.3 566.2 Q25.4 566.2 25.4 567.5 V574 Q25.4 580.3 19.4 580.3 Q16.4 580.3 14.6 577.8 L11.2 572.5 Q10.7 571.3 11.6 570.6 Q12.6 569.9 14.5 570.5 Z" fill="#e9e9e9"/><circle cx="16.8" cy="596.2" r="5.2" fill="none" stroke="#e9e9e9" stroke-width="1.4"/><path d="M20.6 600 L25.8 605.2" stroke="#e9e9e9" stroke-width="2.2" stroke-linecap="round"/><path d="M16.5 592.8 Q19.5 593 20 595.5" fill="none" stroke="#e9e9e9" stroke-width="0.9" opacity="0.7"/><circle cx="12.9" cy="624.1" r="2.2" fill="#e9e9e9"/><circle cx="19" cy="624.1" r="2.2" fill="#e9e9e9"/><circle cx="25.1" cy="624.1" r="2.2" fill="#e9e9e9"/><rect x="7.1" y="646" width="6.8" height="6.7" fill="#dcdcdc"/><rect x="4.7" y="643.9" width="5.2" height="5.2" fill="#000" stroke="#e9e9e9" stroke-width="1"/><path d="M23.5 644.8 H29.4 V650.2" fill="none" stroke="#e9e9e9" stroke-width="1.2"/><path d="M22 644.8 L24.8 642.6 L24.8 647 Z M29.4 652.2 L27.2 649.4 L31.6 649.4 Z" fill="#e9e9e9"/><rect x="14" y="668.2" width="20" height="19.6" fill="#333"/><rect x="15" y="669" width="18" height="18" fill="#fff"/><rect x="4" y="657.5" width="20" height="20.3" fill="#333"/><rect x="4.8" y="658.3" width="18.4" height="18.6" fill="#fff"/><rect x="6.3" y="659.8" width="15.4" height="15.6" fill="#000"/><rect x="10.6" y="699.5" width="15.8" height="11.6" fill="none" stroke="#e9e9e9" stroke-width="1.3"/><circle cx="22.70" cy="705.30" r="0.6" fill="#e9e9e9"/><circle cx="22.12" cy="707.45" r="0.6" fill="#e9e9e9"/><circle cx="20.55" cy="709.02" r="0.6" fill="#e9e9e9"/><circle cx="18.40" cy="709.60" r="0.6" fill="#e9e9e9"/><circle cx="16.25" cy="709.02" r="0.6" fill="#e9e9e9"/><circle cx="14.68" cy="707.45" r="0.6" fill="#e9e9e9"/><circle cx="14.10" cy="705.30" r="0.6" fill="#e9e9e9"/><circle cx="14.68" cy="703.15" r="0.6" fill="#e9e9e9"/><circle cx="16.25" cy="701.58" r="0.6" fill="#e9e9e9"/><circle cx="18.40" cy="701.00" r="0.6" fill="#e9e9e9"/><circle cx="20.55" cy="701.58" r="0.6" fill="#e9e9e9"/><circle cx="22.12" cy="703.15" r="0.6" fill="#e9e9e9"/><rect x="10.6" y="728.9" width="10.5" height="8.6" fill="none" stroke="#e9e9e9" stroke-width="1.3"/><rect x="15.8" y="725.6" width="10.6" height="8.6" fill="#535353" stroke="#e9e9e9" stroke-width="1.3"/></svg>
<svg class="a" style="left:0;top:0" width="1340" height="64"><rect x="5" y="41" width="3" height="1" fill="#3f3f3f"/><rect x="5" y="43" width="3" height="1" fill="#3f3f3f"/><rect x="5" y="45" width="3" height="1" fill="#3f3f3f"/><rect x="5" y="47" width="3" height="1" fill="#3f3f3f"/><rect x="5" y="49" width="3" height="1" fill="#3f3f3f"/><rect x="5" y="51" width="3" height="1" fill="#3f3f3f"/><path d="M29.5 39 L32.2 41.8 L30.3 41.8 L30.3 45.7 L34.2 45.7 L34.2 43.8 L37 46.5 L34.2 49.2 L34.2 47.3 L30.3 47.3 L30.3 51.2 L32.2 51.2 L29.5 54 L26.8 51.2 L28.7 51.2 L28.7 47.3 L24.8 47.3 L24.8 49.2 L22 46.5 L24.8 43.8 L24.8 45.7 L28.7 45.7 L28.7 41.8 L26.8 41.8 Z" fill="#e9e9e9"/><path d="M45.5 45 L49.3 48.7 L53.1 45" fill="none" stroke="#bdbdbd" stroke-width="1"/><rect x="62" y="33" width="1" height="23" fill="#3c3c3c"/><rect x="63" y="33" width="1" height="23" fill="#5e5e5e"/><rect x="219" y="33" width="1" height="23" fill="#3c3c3c"/><rect x="220" y="33" width="1" height="23" fill="#5e5e5e"/><rect x="333" y="33" width="1" height="23" fill="#3c3c3c"/><rect x="334" y="33" width="1" height="23" fill="#5e5e5e"/><rect x="514" y="33" width="1" height="23" fill="#3c3c3c"/><rect x="515" y="33" width="1" height="23" fill="#5e5e5e"/><rect x="695" y="33" width="1" height="23" fill="#3c3c3c"/><rect x="696" y="33" width="1" height="23" fill="#5e5e5e"/><rect x="738" y="33" width="1" height="23" fill="#3c3c3c"/><rect x="739" y="33" width="1" height="23" fill="#5e5e5e"/><rect x="69.5" y="38.5" width="12" height="12" rx="2" fill="#4a4a4a" stroke="#7a7a7a" stroke-width="1"/><rect x="228.5" y="38.5" width="12" height="12" rx="2" fill="#4a4a4a" stroke="#7a7a7a" stroke-width="1"/><path d="M200 44 L203.5 47.5 L207 44" fill="none" stroke="#c8c8c8" stroke-width="1"/><rect x="347" y="39" width="16" height="1" fill="#a8a8a8"/><rect x="350" y="40" width="4" height="12" fill="#a8a8a8"/><rect x="356" y="40" width="4" height="8" fill="#a8a8a8"/><rect x="372" y="45" width="16" height="1" fill="#a8a8a8"/><rect x="376" y="40" width="4" height="11" fill="#a8a8a8"/><rect x="382" y="42" width="4" height="7" fill="#a8a8a8"/><rect x="400" y="50" width="16" height="1" fill="#a8a8a8"/><rect x="402" y="38" width="4" height="12" fill="#a8a8a8"/><rect x="408" y="42" width="4" height="8" fill="#a8a8a8"/><rect x="435" y="38" width="1" height="14" fill="#a8a8a8"/><rect x="437" y="40" width="9" height="4" fill="#a8a8a8"/><rect x="437" y="46" width="11" height="4" fill="#a8a8a8"/><rect x="467" y="38" width="1" height="14" fill="#a8a8a8"/><rect x="464" y="40" width="7" height="4" fill="#a8a8a8"/><rect x="462" y="46" width="11" height="4" fill="#a8a8a8"/><rect x="498" y="38" width="1" height="14" fill="#a8a8a8"/><rect x="490" y="40" width="8" height="4" fill="#a8a8a8"/><rect x="486" y="46" width="12" height="4" fill="#a8a8a8"/><rect x="528" y="39" width="16" height="1" fill="#a8a8a8"/><rect x="533" y="40" width="5" height="4" fill="#a8a8a8"/><rect x="528" y="45" width="16" height="1" fill="#a8a8a8"/><rect x="531" y="46" width="9" height="4" fill="#a8a8a8"/><rect x="554" y="41" width="15" height="1" fill="#a8a8a8"/><rect x="559" y="39" width="5" height="5" fill="#a8a8a8"/><rect x="554" y="48" width="15" height="1" fill="#a8a8a8"/><rect x="557" y="46" width="9" height="5" fill="#a8a8a8"/><rect x="585" y="39" width="5" height="4" fill="#a8a8a8"/><rect x="580" y="43" width="16" height="1" fill="#a8a8a8"/><rect x="583" y="46" width="9" height="4" fill="#a8a8a8"/><rect x="580" y="50" width="16" height="1" fill="#a8a8a8"/><rect x="616" y="38" width="1" height="14" fill="#a8a8a8"/><rect x="622" y="38" width="1" height="14" fill="#a8a8a8"/><rect x="617" y="40" width="4" height="10" fill="#a8a8a8"/><rect x="623" y="42" width="4" height="5" fill="#a8a8a8"/><rect x="644" y="38" width="1" height="14" fill="#a8a8a8"/><rect x="650" y="38" width="1" height="14" fill="#a8a8a8"/><rect x="642" y="40" width="5" height="10" fill="#a8a8a8"/><rect x="648" y="42" width="5" height="5" fill="#a8a8a8"/><rect x="672" y="38" width="1" height="14" fill="#a8a8a8"/><rect x="678" y="38" width="1" height="14" fill="#a8a8a8"/><rect x="668" y="40" width="4" height="10" fill="#a8a8a8"/><rect x="674" y="42" width="4" height="5" fill="#a8a8a8"/><rect x="717" y="38" width="1" height="14" fill="#a8a8a8"/><rect x="712" y="38" width="4" height="5" fill="#a8a8a8"/><rect x="712" y="44" width="4" height="7" fill="#a8a8a8"/><rect x="718" y="38" width="4" height="5" fill="#a8a8a8"/><rect x="718" y="44" width="4" height="7" fill="#a8a8a8"/><g fill="none" stroke="#a8a8a8" stroke-width="1.1"><ellipse cx="820" cy="46.5" rx="8.5" ry="4.5" transform="rotate(20 820 46.5)"/><circle cx="821.5" cy="43" r="3.6" fill="#535353"/></g><path d="M811 48 L815 52 L811 52 Z" fill="#a8a8a8"/><circle cx="845.5" cy="45" r="7.5" fill="none" stroke="#a8a8a8" stroke-width="1.1"/><circle cx="845.5" cy="45" r="3.8" fill="none" stroke="#a8a8a8" stroke-width="1"/><path d="M839 38 L842.5 38.5 L840 41 Z" fill="#a8a8a8"/><path d="M871.5 37 L874 40 L872.6 40 L872.6 43.8 L876.4 43.8 L876.4 42.4 L879.5 45 L876.4 47.6 L876.4 46.2 L872.6 46.2 L872.6 50 L874 50 L871.5 53 L869 50 L870.4 50 L870.4 46.2 L866.6 46.2 L866.6 47.6 L863.5 45 L866.6 42.4 L866.6 43.8 L870.4 43.8 L870.4 40 L869 40 Z" fill="none" stroke="#a8a8a8" stroke-width="1"/><path d="M897.8 37 L900.5 40.5 L895.1 40.5 Z M897.8 53 L900.5 49.5 L895.1 49.5 Z M889 45 L892.5 42.3 L892.5 47.7 Z M906.6 45 L903.1 42.3 L903.1 47.7 Z" fill="#a8a8a8"/><circle cx="897.8" cy="45" r="3.4" fill="#a8a8a8"/><circle cx="897.8" cy="45" r="2" fill="#535353"/><rect x="915" y="41" width="7.5" height="7" fill="#a8a8a8"/><path d="M922.5 44.5 L926 41 L926 48 Z" fill="#a8a8a8"/><path d="M930.8 41 L934.3 44.5 L930.8 48 L927.3 44.5 Z" fill="none" stroke="#a8a8a8" stroke-width="1"/></svg>
</body></html>
